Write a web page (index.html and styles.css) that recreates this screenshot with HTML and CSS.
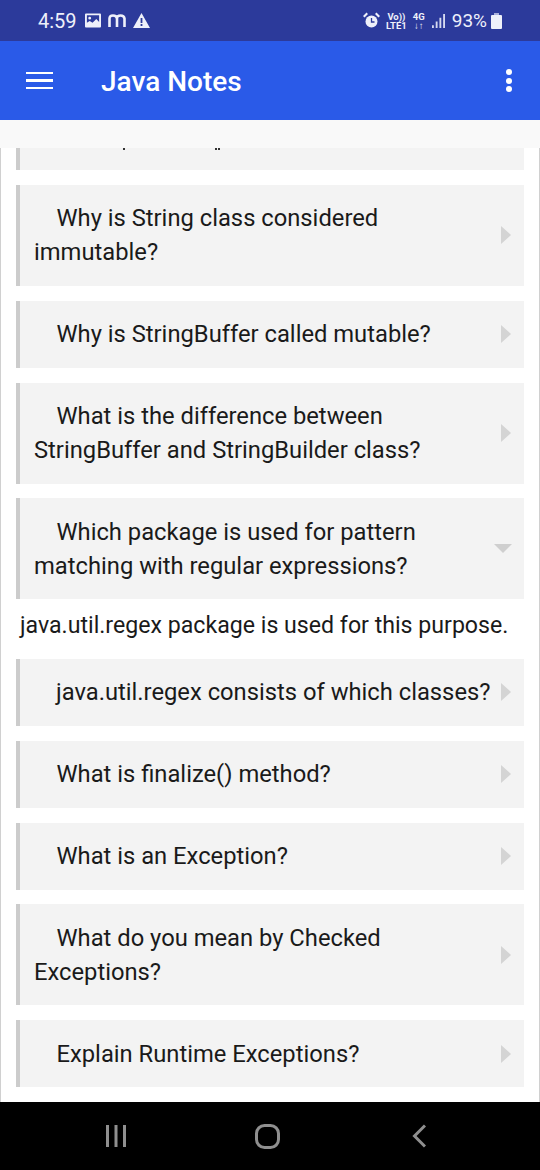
FILE: index.html
```html
<!DOCTYPE html>
<html lang="en">
<head>
  <meta charset="UTF-8">
  <meta name="viewport" content="width=device-width, initial-scale=1.0">
  <title>Java Notes</title>
  <link rel="stylesheet" href="styles.css">
</head>
<body>
  <div class="status-bar">
    <div class="status-left">
      <span class="time">4:59</span>
      <svg width="16" height="15" viewBox="0 0 17 15"><path fill="#eef0fa" fill-rule="evenodd" d="M1 0h15a1 1 0 0 1 1 1v13a1 1 0 0 1-1 1H1a1 1 0 0 1-1-1V1a1 1 0 0 1 1-1zm1 2v8l3-2 3 2 4-4 3 3V2zM5 3.500a1.500 1.500 0 1 1 0 3 1.500 1.500 0 0 1 0-3z"/></svg>
      <svg width="18" height="13" viewBox="0 0 18 13"><path fill="none" stroke="#eef0fa" stroke-width="2.600" d="M1.500 13V4.500Q1.500 1.500 5 1.500T9 4.500V13M9 4.500Q9 1.500 12.500 1.500T16.500 4.500V13"/></svg>
      <svg width="17" height="15" viewBox="0 0 17 15"><path fill="#eef0fa" fill-rule="evenodd" d="M8.500 0L17 15H0zM7.600 5v5h1.800V5zm0 6v2h1.800v-2z"/></svg>
    </div>
    <div class="status-right">
      <svg width="17" height="17" viewBox="0 0 17 17"><circle cx="8.500" cy="9.500" r="6" fill="#eef0fa"/><path fill="none" stroke="#2c3a9b" stroke-width="1.300" d="M8.500 6v4h3"/><path fill="#eef0fa" d="M0 4l3.500-3.500L5 2 1.500 5.500zM17 4L13.500.5 12 2l3.500 3.500z"/></svg>
      <div class="net-label"><span>Vo))</span><span>LTE1</span></div>
      <div class="net-label net-4g"><span>4G</span><span>↓↑</span></div>
      <svg class="signal" width="13" height="15" viewBox="0 0 14 16"><path fill="#d5d9f0" d="M0 13h2v3H0zM4 9h2v7H4zM8 5h2v11H8zM12 1h2v15h-2z"/></svg>
      <span class="battery-text">93%</span>
      <div class="battery"></div>
    </div>
  </div>

  <header class="app-bar">
    <div class="menu-icon"><span></span><span></span><span></span></div>
    <h1 class="app-title">Java Notes</h1>
    <div class="more-icon"><span></span><span></span><span></span></div>
  </header>

  <div class="strip"></div>

  <main class="content">
    <div class="list">
      <div class="item item-cut">
        <span class="speck"></span>
        <span class="speck speck-2"></span>
        <span class="speck speck-3"></span>
      </div>

      <div class="item">
        <p class="question">Why is String class considered immutable?</p>
        <span class="arrow"></span>
      </div>
      <div class="item">
        <p class="question">Why is StringBuffer called mutable?</p>
        <span class="arrow"></span>
      </div>
      <div class="item">
        <p class="question">What is the difference between StringBuffer and StringBuilder class?</p>
        <span class="arrow"></span>
      </div>
      <div class="item">
        <p class="question">Which package is used for pattern matching with regular expressions?</p>
        <span class="arrow-down"></span>
      </div>
      <p class="answer">java.util.regex package is used for this purpose.</p>
      <div class="item">
        <p class="question nowrap">java.util.regex consists of which classes?</p>
        <span class="arrow"></span>
      </div>
      <div class="item">
        <p class="question">What is finalize() method?</p>
        <span class="arrow"></span>
      </div>
      <div class="item">
        <p class="question">What is an Exception?</p>
        <span class="arrow"></span>
      </div>
      <div class="item">
        <p class="question">What do you mean by Checked Exceptions?</p>
        <span class="arrow"></span>
      </div>
      <div class="item">
        <p class="question">Explain Runtime Exceptions?</p>
        <span class="arrow"></span>
      </div>
    </div>
  </main>

  <nav class="nav-bar">
    <svg width="22" height="22" viewBox="0 0 22 22"><path fill="none" stroke="#8f8f8f" stroke-width="3" d="M2.500 0v22M11 0v22M19.500 0v22"/></svg>
    <svg class="nav-home" width="25" height="25" viewBox="0 0 25 25"><rect x="1.500" y="1.500" width="22" height="22" rx="8" fill="none" stroke="#8f8f8f" stroke-width="3"/></svg>
    <svg class="nav-back" width="14" height="24" viewBox="0 0 14 24"><path fill="none" stroke="#8f8f8f" stroke-width="3" d="M13 1.500L2.500 12 13 22.500"/></svg>
  </nav>
</body>
</html>
```

FILE: styles.css
```css
* {
  box-sizing: border-box;
}

html, body {
  margin: 0;
  padding: 0;
}

body {
  font-family: 'Roboto', sans-serif;
  width: 540px;
  height: 1170px;
  display: flex;
  flex-direction: column;
  overflow: hidden;
  background: white;
}

.status-bar {
  height: 41px;
  flex: none;
  background: #2c3a9b;
  color: #eef0fa;
  display: flex;
  justify-content: space-between;
  align-items: center;
  padding: 0 0 0 38px;
}

.status-left {
  display: flex;
  align-items: center;
  gap: 7px;
}

.time {
  font-size: 20px;
  margin-right: 1px;
}

.status-right {
  display: flex;
  align-items: center;
  padding-right: 38px;
}

.net-label {
  display: flex;
  flex-direction: column;
  align-items: center;
  font-size: 9.500px;
  font-weight: 700;
  line-height: 9px;
  margin-left: 6px;
}

.net-4g {
  margin-left: 6px;
}

.signal {
  margin-left: 7px;
}

.battery-text {
  font-size: 19px;
  margin-left: 7px;
}

.battery {
  position: relative;
  width: 11px;
  height: 14px;
  margin: 2px 0 0 4px;
  background: #eef0fa;
  border-radius: 1px;
}

.battery::before {
  content: "";
  position: absolute;
  top: -2px;
  left: 3px;
  width: 5px;
  height: 2px;
  background: #a9b0dc;
}

.app-bar {
  height: 79px;
  flex: none;
  background: #2a5ae8;
  color: white;
  display: flex;
  align-items: center;
  padding: 0 28px 0 26px;
}

.menu-icon {
  width: 27px;
  display: flex;
  flex-direction: column;
  gap: 5px;
}

.menu-icon span {
  height: 2.500px;
  background: white;
}

.app-title {
  margin: 2px 0 0 48px;
  font-size: 28px;
  font-weight: 500;
  flex: 1;
}

.more-icon {
  display: flex;
  flex-direction: column;
  gap: 2.500px;
}

.more-icon span {
  width: 6px;
  height: 6px;
  border-radius: 50%;
  background: white;
}

.strip {
  height: 28px;
  flex: none;
  background: #f9f9f9;
}

.content {
  flex: 1;
  min-height: 0;
  overflow: hidden;
  background: white;
  border-left: 1px solid #d0d0d0;
  border-right: 1px solid #d0d0d0;
  padding: 0 15px;
}

.list {
  display: flex;
  flex-direction: column;
  gap: 14.800px;
}

.item {
  display: flex;
  align-items: center;
  background: #f3f3f3;
  border-left: 4px solid #cccccc;
  padding: 16.500px 13px 16.500px 14px;
}

.item-cut {
  height: 22.200px;
  padding: 0;
  align-items: flex-start;
}

/* descenders of the row scrolled off the top */
.speck {
  width: 2px;
  height: 2px;
  margin-left: 103px;
  background: #333;
}

.speck-2 {
  margin-left: 90px;
}

.speck-3 {
  margin-left: 1px;
}

.question {
  flex: 1;
  min-width: 0;
  margin: 0;
  font-size: 23.750px;
  line-height: 34px;
  color: #1a1a1a;
  text-indent: 22.500px;
}

.nowrap {
  white-space: nowrap;
  text-indent: 22px;
}

.arrow {
  flex: none;
  width: 0;
  height: 0;
  margin-left: 8px;
  border-left: 10px solid #d4d4d4;
  border-top: 9px solid transparent;
  border-bottom: 9px solid transparent;
}

.arrow-down {
  flex: none;
  width: 0;
  height: 0;
  margin-left: 8px;
  margin-right: -1px;
  border-top: 9px solid #cfcfcf;
  border-left: 9px solid transparent;
  border-right: 9px solid transparent;
}

.answer {
  margin: -15px 0;
  padding: 0 0 7px 4px;
  height: 60px;
  display: flex;
  align-items: center;
  font-size: 23.150px;
  color: #1a1a1a;
  white-space: nowrap;
}

.nav-bar {
  height: 68px;
  flex: none;
  background: black;
  display: flex;
  align-items: center;
  padding: 0 0 0 105px;
}

.nav-home {
  margin-left: 128px;
}

.nav-back {
  margin-left: 132px;
}
```
